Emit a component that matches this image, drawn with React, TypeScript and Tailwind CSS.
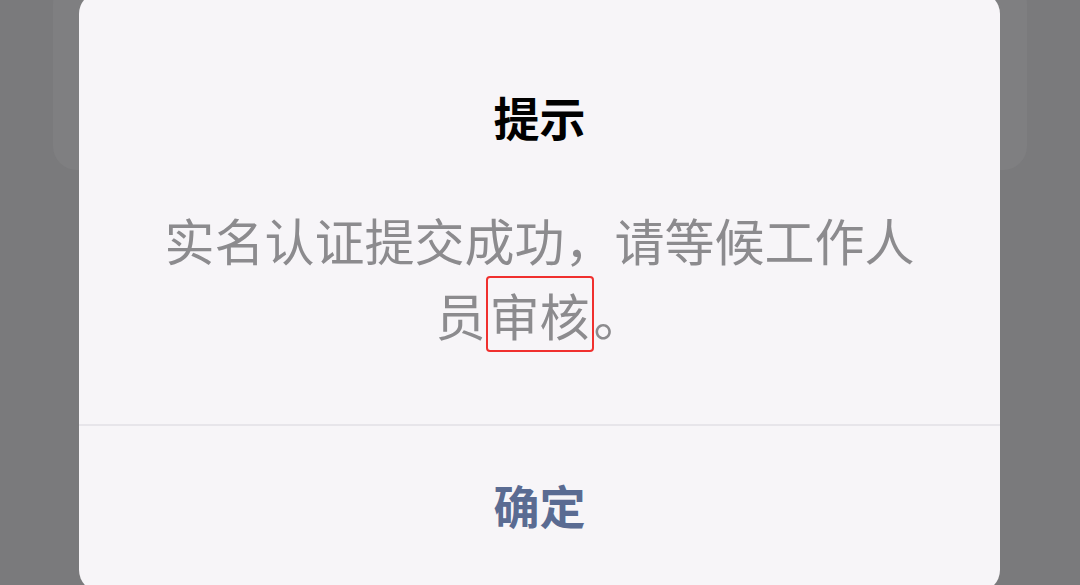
import React from 'react';

const cjk = { fontFamily: "'Noto Sans CJK SC', 'Noto Sans', sans-serif" };

const App: React.FC = () => {
  return (
    <div className="relative h-[585px] w-[1080px] overflow-hidden bg-[#7a7a7c]" style={cjk}>
      {/* page underneath, dimmed by the mask */}
      <div className="mx-[53px] -mt-[20px] h-[190px] rounded-[24px] bg-[#7f7f81]" />

      {/* dialog */}
      <div className="absolute left-[79px] top-[-8px] flex h-[600px] w-[921px] flex-col rounded-[22px] bg-[#f7f5f8]">
        <div className="pt-[96px] text-center text-[46px] font-semibold leading-[56px] text-black">
          提示
        </div>

        <div className="px-[80px] pt-[58px] text-center text-[50px] leading-[75px] text-[#8c8b8e]">
          实名认证提交成功，请等候工作人员
          <span className="rounded-[4px] border-2 border-[#f0302e] px-[2px]">审核</span>
          。
        </div>

        <div className="mt-auto h-[2px] bg-[#e7e5ea]" />

        <div className="flex h-[166px] items-center justify-center pb-[10px] text-[46px] font-semibold text-[#5a6b92]">
          确定
        </div>
      </div>
    </div>
  );
};

export default App;
